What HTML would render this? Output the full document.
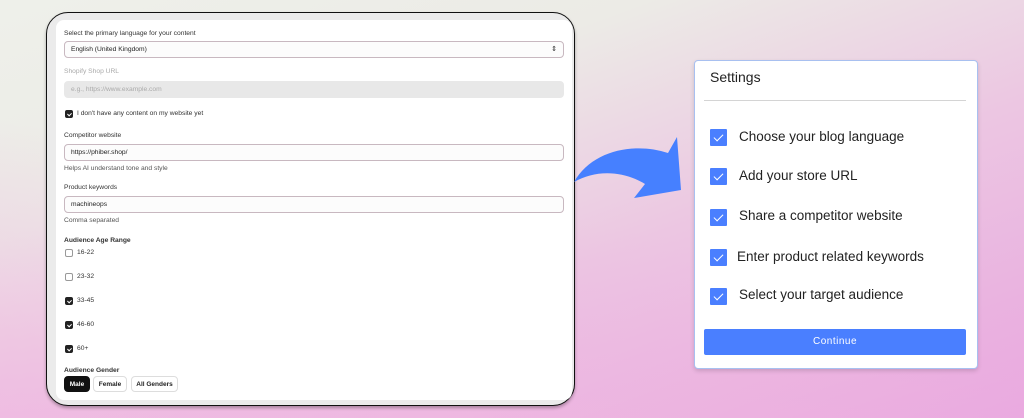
<!DOCTYPE html>
<html><head><meta charset="utf-8"><style>
*{margin:0;padding:0;box-sizing:border-box}
body{width:1024px;height:418px;overflow:hidden;position:relative;font-family:"Liberation Sans",sans-serif;
background:linear-gradient(160deg,#eef0ea 0%,#ecebe6 30%,#ecc6e2 60%,#e8a6df 100%);}
.bg2{position:absolute;inset:0;background:linear-gradient(10deg,rgba(240,180,225,.7) 0%,rgba(240,200,230,0) 50%);}
.dev{position:absolute;left:46px;top:12px;width:529px;height:394px;border:1.5px solid #111;border-radius:22px;background:#ebebeb;box-shadow:0 2px 3px rgba(0,0,0,.3)}
.pan{position:absolute;left:56px;top:20px;width:516px;height:380px;background:#fff;border-radius:8px;}
.t{position:absolute;font-size:6.7px;color:#333;white-space:nowrap;line-height:8px}
.in{position:absolute;left:64px;width:500px;height:17px;border:1px solid #c8b8c0;border-radius:4px;background:#fcfcfc;font-size:6.7px;padding:4px 0 0 6px;color:#222}
.cb{position:absolute;left:65px;width:8px;height:8px;border-radius:2px;border:1px solid #999;background:#fff}
.cb.on{background:#222;border-color:#222}
.cb.on::after{content:"";position:absolute;left:2px;top:1px;width:2px;height:3px;border:solid #fff;border-width:0 1px 1px 0;transform:rotate(45deg)}
.btn{position:absolute;top:376px;height:16px;border:1px solid #ddd;border-radius:4px;font-size:6.5px;font-weight:bold;padding-top:4px;text-align:center;background:#fff;color:#222}
.card{position:absolute;left:694px;top:60px;width:284px;height:309px;background:#fff;border:1px solid #a8c0f0;border-radius:4px;box-shadow:0 2px 4px rgba(0,0,0,.15)}
.ck{position:absolute;left:710px;width:17px;height:17px;background:#4a7fff;border-radius:1px}
.ck::after{content:"";position:absolute;left:6px;top:3px;width:4px;height:8px;border:solid #fff;border-width:0 1px 1px 0;transform:rotate(45deg)}
.it{position:absolute;left:739px;font-size:13.5px;color:#222;white-space:nowrap;letter-spacing:0}
</style></head><body>
<div class="bg2"></div>
<div class="dev"></div>
<div class="pan"></div>
<div class="t" style="left:64px;top:30px">Select the primary language for your content</div>
<div class="in" style="top:41px">English (United Kingdom)<span style="position:absolute;right:6px;top:3px;font-size:7px">⇕</span></div>
<div class="t" style="left:64px;top:68px;color:#aaa">Shopify Shop URL</div>
<div class="in" style="top:81px;background:#e8e8e8;border-color:#e8e8e8;color:#aaa">e.g., https://www.example.com</div>
<div class="cb on" style="top:110px"></div><div class="t" style="left:77px;top:110px">I don't have any content on my website yet</div>
<div class="t" style="left:64px;top:132px">Competitor website</div>
<div class="in" style="top:144px">https://phiber.shop/</div>
<div class="t" style="left:64px;top:165px;color:#555">Helps AI understand tone and style</div>
<div class="t" style="left:64px;top:184px">Product keywords</div>
<div class="in" style="top:196px">machineops</div>
<div class="t" style="left:64px;top:217px;color:#555">Comma separated</div>
<div class="t" style="left:64px;top:237px;font-weight:bold">Audience Age Range</div>
<div class="cb" style="top:249px"></div><div class="t" style="left:77px;top:249px">16-22</div>
<div class="cb" style="top:273px"></div><div class="t" style="left:77px;top:273px">23-32</div>
<div class="cb on" style="top:297px"></div><div class="t" style="left:77px;top:297px">33-45</div>
<div class="cb on" style="top:321px"></div><div class="t" style="left:77px;top:321px">46-60</div>
<div class="cb on" style="top:345px"></div><div class="t" style="left:77px;top:345px">60+</div>
<div class="t" style="left:64px;top:367px;font-weight:bold">Audience Gender</div>
<div class="btn" style="left:64px;width:26px;background:#111;color:#fff;border-color:#111">Male</div>
<div class="btn" style="left:93px;width:34px">Female</div>
<div class="btn" style="left:131px;width:47px">All Genders</div>
<svg style="position:absolute;left:0;top:0" width="1024" height="418"><path d="M574 182 C592 150 635 142 668 153 L677 137 L681 190 L634 198 L645 184 C622 170 595 170 574 182Z" fill="#4680ff"/></svg>
<div class="card"></div>
<div style="position:absolute;left:710px;top:69px;font-size:14px;color:#222">Settings</div>
<div style="position:absolute;left:704px;top:100px;width:262px;height:1px;background:#d4d4d4"></div>
<div class="ck" style="top:129px"></div><div class="it" style="top:129px">Choose your blog language</div>
<div class="ck" style="top:168px"></div><div class="it" style="top:168px">Add your store URL</div>
<div class="ck" style="top:209px"></div><div class="it" style="top:208px">Share a competitor website</div>
<div class="ck" style="top:249px"></div><div class="it" style="top:249px;left:737px">Enter product related keywords</div>
<div class="ck" style="top:288px"></div><div class="it" style="top:287px">Select your target audience</div>
<div style="position:absolute;left:704px;top:329px;width:262px;height:26px;background:#4a7fff;border-radius:2px;color:#fff;font-size:10px;text-align:center;line-height:26px;letter-spacing:.5px">Continue</div>
</body></html>
